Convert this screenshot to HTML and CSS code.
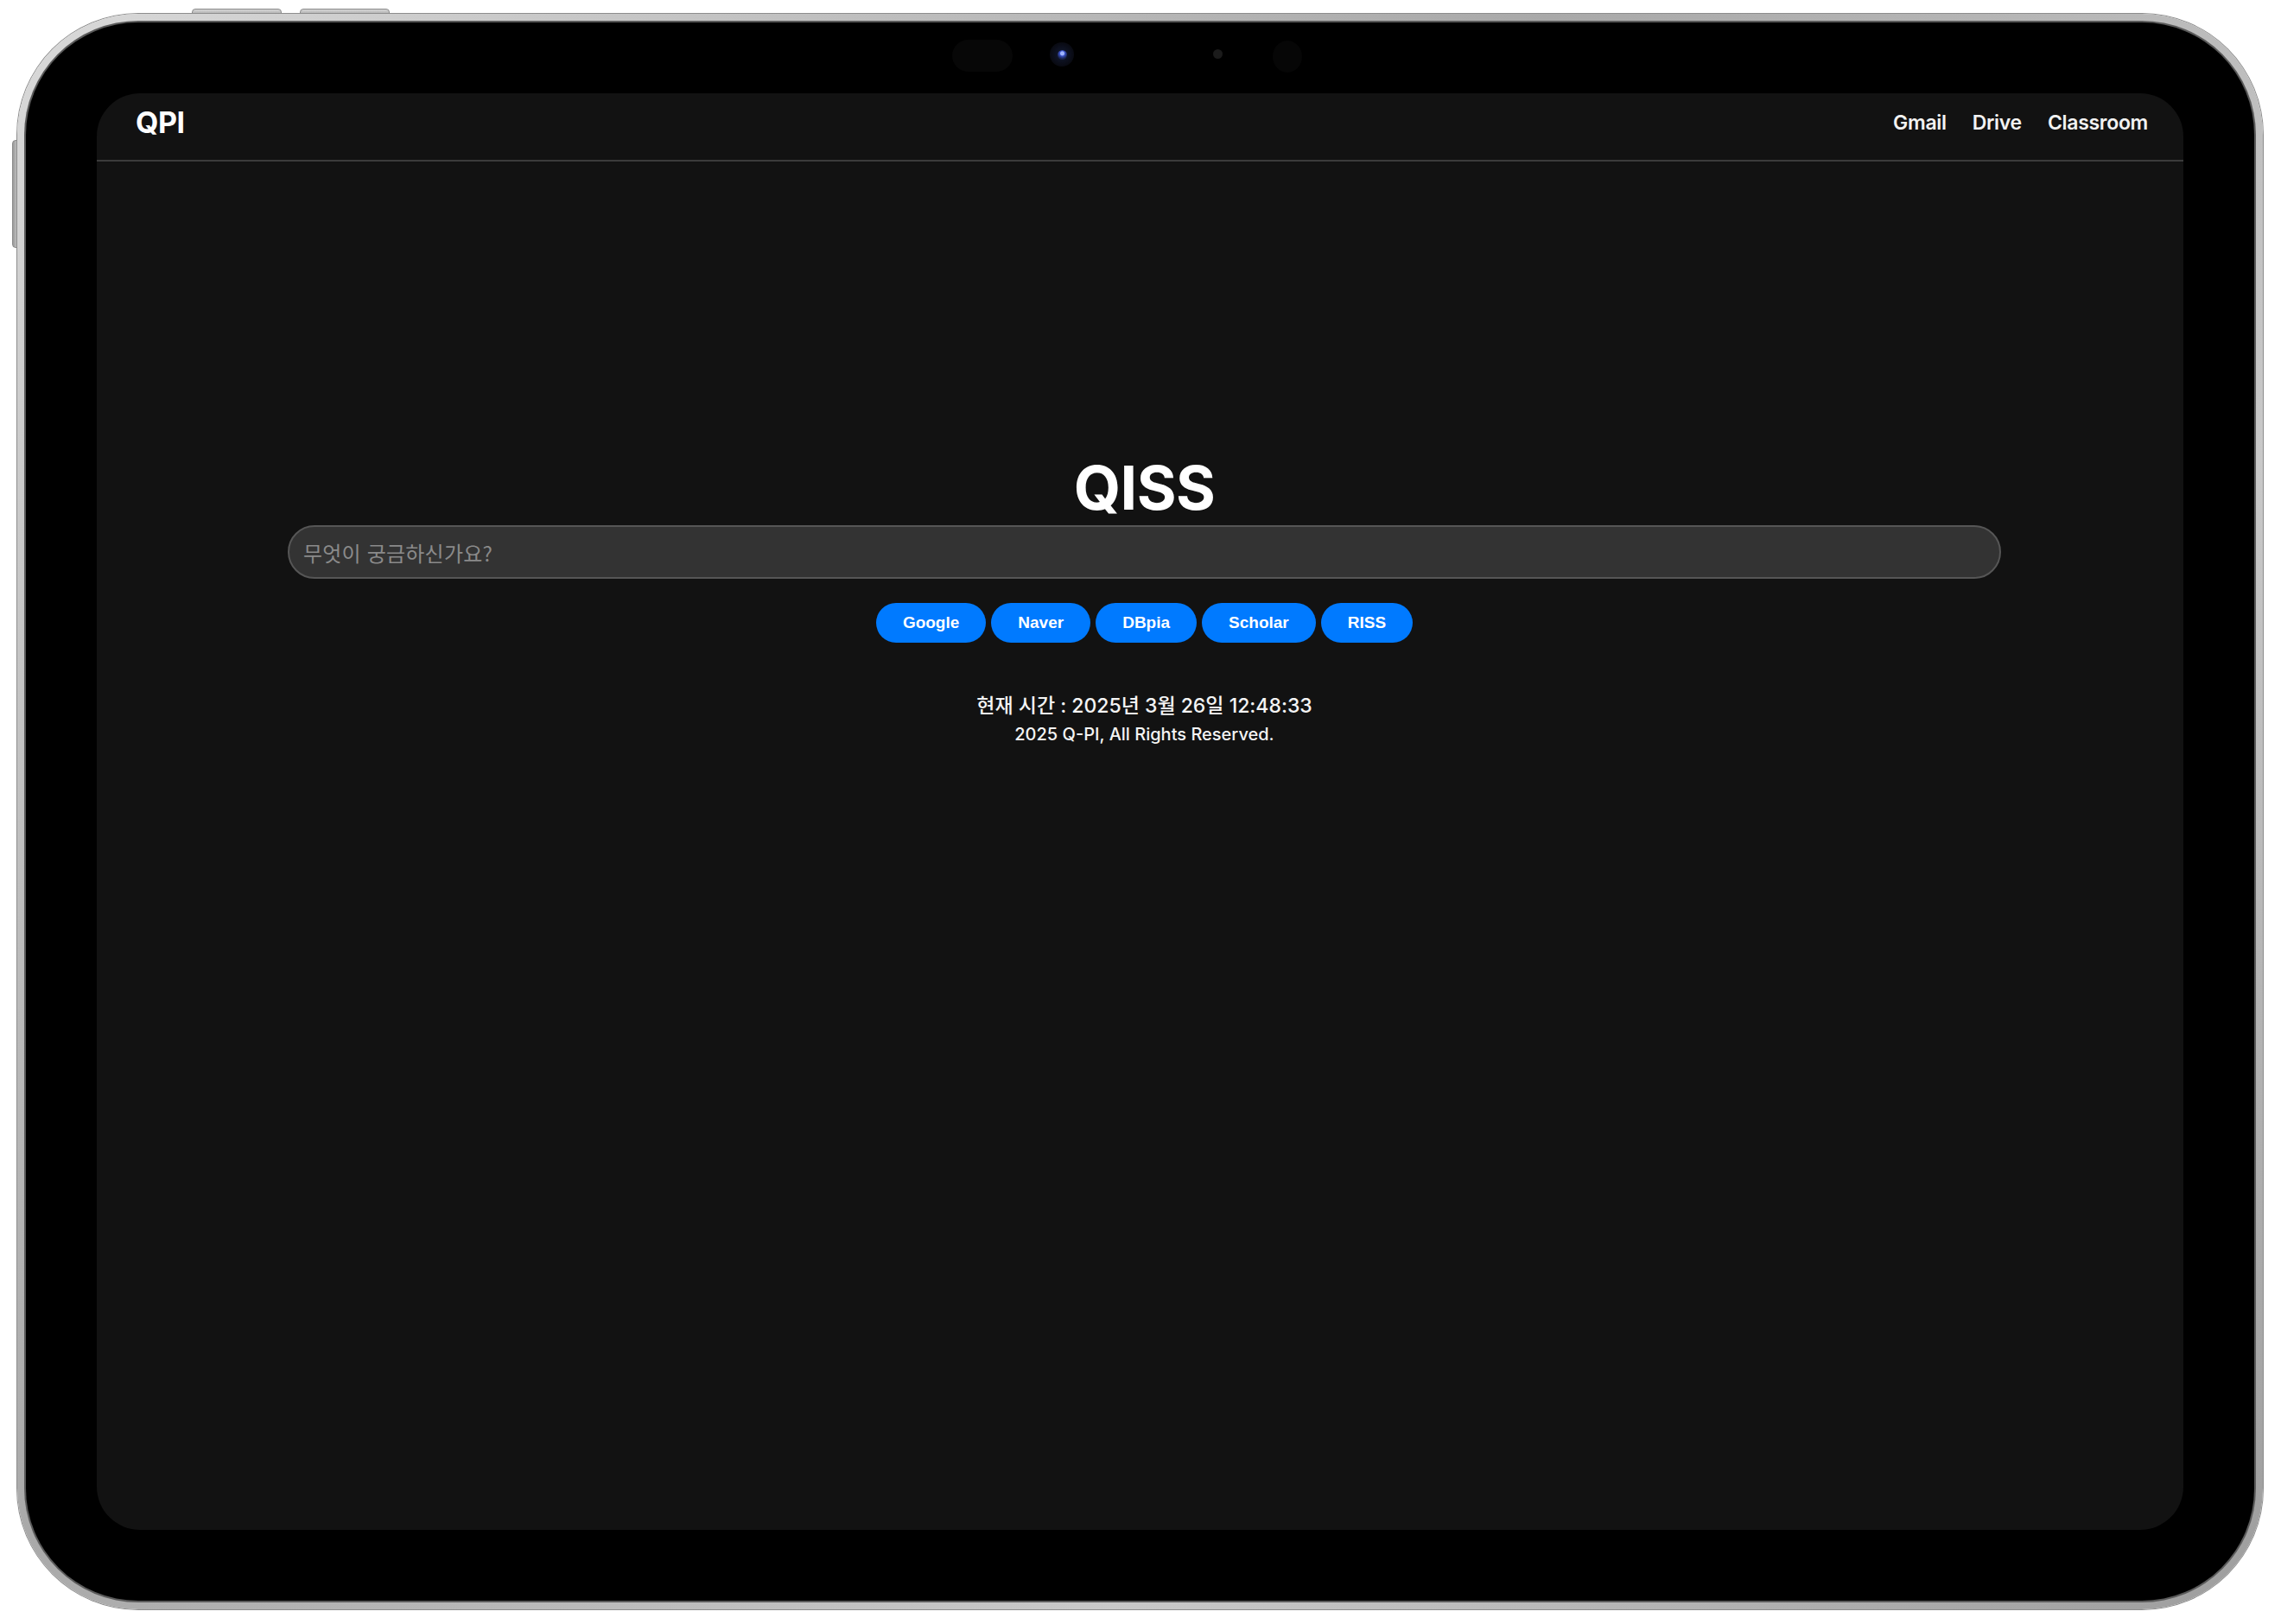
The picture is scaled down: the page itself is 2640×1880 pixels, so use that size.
FILE: index.html
```html
<!DOCTYPE html>
<html lang="ko">
<head>
<meta charset="utf-8">
<title>QISS</title>
<link rel="stylesheet" href="styles.css">
</head>
<body>
<div class="stage">
  <div class="hw hw-top hw-top-1"></div>
  <div class="hw hw-top hw-top-2"></div>
  <div class="hw hw-side"></div>
  <div class="device">
    <div class="bezel">
      <div class="sensor sensor-pill"></div>
      <div class="sensor sensor-cam"><div class="lens"></div></div>
      <div class="sensor sensor-dot"></div>
      <div class="sensor sensor-round"></div>
      <div class="screen">
        <header class="topbar">
          <div class="logo">QPI</div>
          <nav class="links">
            <a class="link">Gmail</a>
            <a class="link">Drive</a>
            <a class="link">Classroom</a>
          </nav>
        </header>
        <main class="main">
          <h1 class="title">QISS</h1>
          <div class="search"><span class="placeholder">무엇이 궁금하신가요?</span></div>
          <div class="engines">
            <button class="engine">Google</button>
            <button class="engine">Naver</button>
            <button class="engine">DBpia</button>
            <button class="engine">Scholar</button>
            <button class="engine">RISS</button>
          </div>
          <p class="clock">현재 시간 : 2025년 3월 26일 12:48:33</p>
          <p class="copy">2025 Q-PI, All Rights Reserved.</p>
        </main>
      </div>
    </div>
  </div>
</div>
</body>
</html>
```
FILE: styles.css
```css
html, body {
  margin: 0;
  padding: 0;
  background: #ffffff;
}
body {
  width: 2640px;
  height: 1880px;
  overflow: hidden;
  font-family: "Inter", "Noto Sans CJK KR", sans-serif;
}
.stage {
  position: relative;
  padding: 16px 0 0 20px;
}
.hw {
  position: absolute;
  background: linear-gradient(#d6d6d6, #9a9a9a);
  border: 1px solid #8a8a8a;
}
.hw-top {
  top: 10px;
  height: 8px;
  width: 102px;
  border-radius: 4px 4px 0 0;
}
.hw-top-1 { left: 222px; }
.hw-top-2 { left: 347px; }
.hw-side {
  left: 14px;
  top: 162px;
  width: 7px;
  height: 123px;
  border-radius: 4px 0 0 4px;
  background: linear-gradient(90deg, #9a9a9a, #d6d6d6);
}
.device {
  position: relative;
  box-sizing: border-box;
  width: 2599px;
  height: 1847px;
  padding: 10px;
  border-radius: 140px;
  background: linear-gradient(135deg, #d9d9d9 0%, #a9a9a9 40%, #c9c9c9 70%, #9d9d9d 100%);
  box-shadow: 0 0 0 1px #8d8d8d;
}
.bezel {
  position: relative;
  box-sizing: border-box;
  height: 100%;
  padding: 82px;
  border-radius: 130px;
  background: #000;
  box-shadow: 0 0 0 2px #5a5a5a;
}
.sensor {
  position: absolute;
  border-radius: 50%;
}
.sensor-pill {
  left: 1072px;
  top: 20px;
  width: 70px;
  height: 37px;
  border-radius: 19px;
  background: #070707;
}
.sensor-cam {
  left: 1185px;
  top: 23px;
  width: 28px;
  height: 28px;
  background: radial-gradient(circle, #121a33 0%, #0a0c16 60%, #050507 100%);
  display: flex;
  align-items: center;
  justify-content: center;
}
.lens {
  width: 11px;
  height: 11px;
  border-radius: 50%;
  background: radial-gradient(circle at 50% 35%, #9fb4ff 0 2px, #3b53c9 3px, #1a2450 6px);
}
.sensor-dot {
  left: 1374px;
  top: 31px;
  width: 11px;
  height: 11px;
  background: #1b1b1b;
}
.sensor-round {
  left: 1443px;
  top: 21px;
  width: 34px;
  height: 37px;
  background: #060606;
}
.screen {
  box-sizing: border-box;
  height: 100%;
  border-radius: 50px;
  background: #121212;
  overflow: hidden;
  color: #ffffff;
}
.topbar {
  box-sizing: border-box;
  height: 79px;
  padding: 0 41px 10px 45px;
  border-bottom: 2px solid #3b3b3b;
  display: flex;
  align-items: center;
  justify-content: space-between;
}
.logo {
  font-size: 34px;
  font-weight: 700;
  letter-spacing: -0.5px;
}
.links {
  display: flex;
  gap: 30px;
}
.link {
  font-size: 23px;
  font-weight: 600;
  letter-spacing: -0.3px;
  color: #f2f2f2;
}
.main {
  display: flex;
  flex-direction: column;
  align-items: center;
  padding: 338px 211px 0 221px;
}
.title {
  margin: 0;
  font-size: 70px;
  line-height: 80px;
  font-weight: 700;
  letter-spacing: -0.5px;
}
.search {
  box-sizing: border-box;
  align-self: stretch;
  margin-top: 3px;
  height: 62px;
  padding: 0 16px;
  border: 2px solid #565656;
  border-radius: 31px;
  background: #333333;
  display: flex;
  align-items: center;
}
.placeholder {
  font-family: "Noto Sans CJK KR", sans-serif;
  font-size: 24px;
  color: #8a8a8a;
  letter-spacing: 0.2px;
}
.engines {
  display: flex;
  gap: 6px;
  margin-top: 28px;
}
.engine {
  height: 46px;
  padding: 0 31px;
  border: none;
  border-radius: 23px;
  background: #007aff;
  color: #ffffff;
  font-family: "Liberation Sans", sans-serif;
  font-weight: 700;
  font-size: 19px;
}
.clock {
  margin: 58px 0 0;
  font-size: 23px;
  line-height: 30px;
  font-weight: 500;
  color: #f4f4f4;
}
.copy {
  margin: 5px 0 0;
  font-size: 20px;
  line-height: 26px;
  font-weight: 500;
  color: #f4f4f4;
}
```
